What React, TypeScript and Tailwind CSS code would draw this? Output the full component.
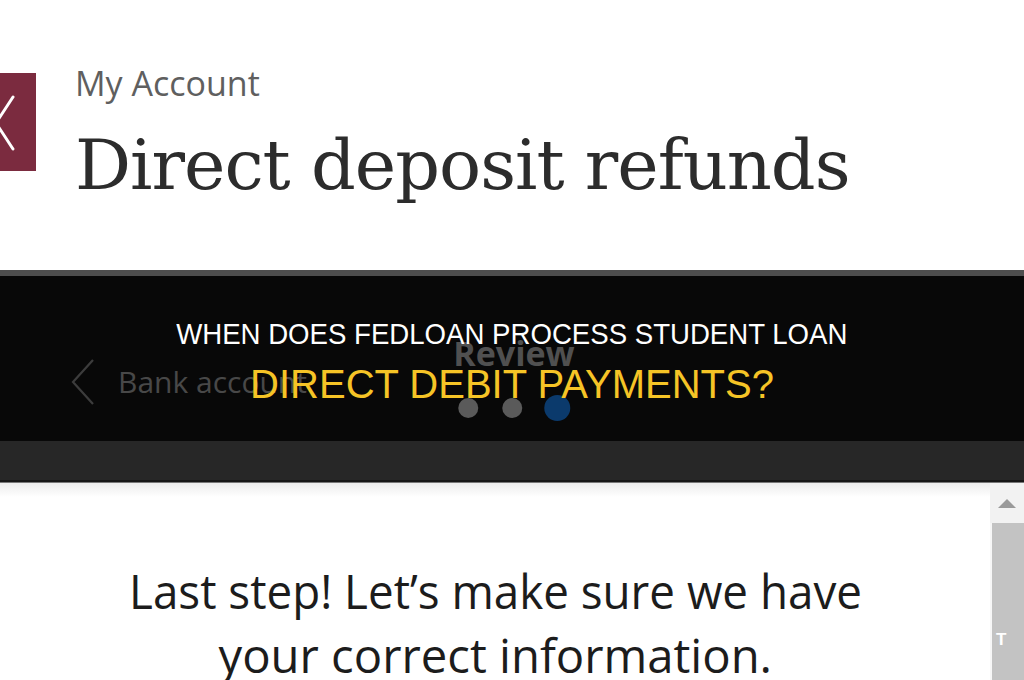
const sans = "font-['Open_Sans','Noto_Sans',sans-serif]";

function Scrollbar() {
  return (
    <div className="flex w-[34px] shrink-0 flex-col bg-[#f2f2f2]">
      <div className="flex h-[40px] items-center justify-center">
        <div className="h-0 w-0 border-x-[9px] border-b-[9px] border-x-transparent border-b-[#9a9a9a]" />
      </div>
      <div className="relative flex-1 border-l-2 border-[#f7f7f7] bg-[#c3c3c3]">
        <span className="absolute left-[4px] top-[108px] font-['Liberation_Sans',sans-serif] text-[17px] font-bold leading-none text-white">
          T
        </span>
      </div>
    </div>
  );
}

export default function App() {
  return (
    <div className="flex h-[680px] w-[1024px] flex-col overflow-hidden bg-white">
      {/* page header */}
      <header className="flex h-[270px] shrink-0 items-start pt-[73px]">
        <button
          type="button"
          className="flex h-[98px] w-[36px] items-center justify-end overflow-hidden bg-[#7b2b3f]"
        >
          <svg width="36" height="98" viewBox="0 0 36 98" fill="none">
            <path d="M13 24 L-4 50 L13 76" stroke="#fff" strokeWidth="3" strokeLinecap="round" />
          </svg>
        </button>
        <div className="ml-[39px] flex flex-col">
          <span className={`${sans} -mt-[12px] text-[34px] leading-[44px] text-[#5f5f5f]`}>
            My Account
          </span>
          <h1 className="mt-[15px] font-['DejaVu_Serif',serif] text-[70px] leading-[90px] tracking-[-1px] text-[#2c2c2c]">
            Direct deposit refunds
          </h1>
        </div>
      </header>

      {/* step navigation, dimmed */}
      <section className="relative shrink-0">
        <div className="h-[6px] bg-[#4e4e4e]" />
        <div className="relative flex h-[165px] items-center bg-[#080808]">
          <div className="flex items-center pl-[70px] pt-[46px]">
            <svg width="26" height="48" viewBox="0 0 26 48" fill="none">
              <path d="M23 2 L3 24 L23 46" stroke="#3c3c3c" strokeWidth="2.2" />
            </svg>
            <span className={`${sans} ml-[22px] text-[30px] text-[#484848]`}>
              Bank account
            </span>
          </div>
          <div className="absolute left-[514px] top-[59px] flex -translate-x-1/2 flex-col items-center">
            <span className={`${sans} text-[34px] font-bold leading-[36px] text-[#505050]`}>
              Review
            </span>
            <div className="mt-[25px] flex h-[24px] items-center">
              <span className="h-[20px] w-[20px] rounded-full bg-[#5a5a5a]" />
              <span className="ml-[24px] h-[20px] w-[20px] rounded-full bg-[#5a5a5a]" />
              <span className="ml-[22px] h-[26px] w-[26px] rounded-full bg-[#0b3a6c]" />
            </div>
          </div>

          <div className="absolute inset-0 flex flex-col items-center justify-center pt-[4px] font-['Liberation_Sans_Narrow','Liberation_Sans',sans-serif] uppercase">
            <h2 className="scale-x-[0.92] text-[30px] leading-[40px] text-white">
              When does FedLoan process student loan
            </h2>
            <p className="mt-[7px] text-[40px] leading-[46px] text-[#f6c426]">
              Direct debit payments?
            </p>
          </div>
        </div>
        <div className="h-[39px] bg-[#272727]" />
        <div className="h-[2px] bg-[#161616]" />
        <div className="h-[1px] bg-[#777]" />
      </section>

      {/* confirmation body */}
      <main className="flex min-h-0 flex-1">
        <div className="flex flex-1 flex-col items-center bg-gradient-to-b from-[#ececec] to-white to-[14px] pt-[76px]">
          <p className={`${sans} flex flex-col items-center text-[48px] leading-[64px] text-[#1c1c1c]`}>
            <span className="scale-x-[0.953] whitespace-nowrap">Last step! Let’s make sure we have</span>
            <span className="scale-x-[0.984] whitespace-nowrap">your correct information.</span>
          </p>
        </div>
        <Scrollbar />
      </main>
    </div>
  );
}
